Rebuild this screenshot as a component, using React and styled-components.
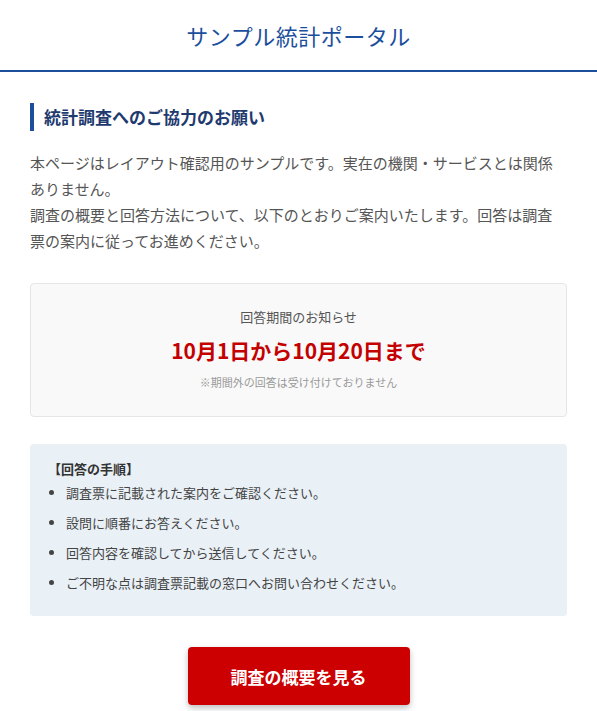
import React from 'react';
import styled, { createGlobalStyle } from 'styled-components';

const GlobalStyle = createGlobalStyle`
  html, body {
    margin: 0;
    padding: 0;
    background: #ffffff;
    font-family: "Noto Sans CJK JP", "Noto Sans", sans-serif;
    color: #444;
  }
  * { box-sizing: border-box; }
`;

const Header = styled.header`
  height: 72px;
  display: flex;
  align-items: center;
  justify-content: center;
  border-bottom: 2px solid #1b4f9c;
`;

const SiteTitle = styled.h1`
  margin: 0;
  font-size: 22px;
  font-weight: 400;
  color: #1b4f9c;
  letter-spacing: 0.5px;
`;

const Main = styled.main`
  padding: 31px 30px 20px;
  display: flex;
  flex-direction: column;
`;

const SectionTitle = styled.h2`
  margin: 0;
  padding-left: 10px;
  border-left: 4px solid #1b4f9c;
  font-size: 17px;
  font-weight: 700;
  color: #1e3a6e;
  line-height: 28px;
`;

const Lead = styled.p`
  margin: 19px 0 0;
  font-size: 15px;
  line-height: 26px;
  color: #555;
`;

const NoticeCard = styled.div`
  margin-top: 29px;
  background: #f9f9f9;
  border: 1px solid #e6e6e6;
  border-radius: 4px;
  padding: 23px 16px 26px;
  display: flex;
  flex-direction: column;
  align-items: center;
  gap: 9px;
`;

const CardSub = styled.div`
  font-size: 13px;
  color: #555;
`;

const CardHeadline = styled.div`
  font-size: 21px;
  font-weight: 700;
  color: #c40000;
`;

const CardNote = styled.div`
  font-size: 11px;
  color: #999;
`;

const StepsBox = styled.div`
  margin-top: 27px;
  background: #e9f0f6;
  border-radius: 4px;
  padding: 15px 18px 23px;
`;

const StepsTitle = styled.div`
  font-size: 13px;
  font-weight: 700;
  color: #333;
  margin-bottom: 5px;
`;

const StepList = styled.ul`
  margin: 0;
  padding-left: 18px;
  display: flex;
  flex-direction: column;
  gap: 10px;
`;

const Step = styled.li`
  font-size: 13px;
  line-height: 20px;
  color: #444;
`;

const ButtonRow = styled.div`
  margin-top: 31px;
  display: flex;
  justify-content: center;
`;

const ActionButton = styled.button`
  width: 222px;
  height: 58px;
  border: none;
  border-radius: 4px;
  background: #cc0000;
  color: #fff;
  font-family: inherit;
  font-size: 17px;
  font-weight: 700;
  box-shadow: 0 3px 6px rgba(0, 0, 0, 0.25);
  cursor: pointer;
`;

const steps = [
  '調査票に記載された案内をご確認ください。',
  '設問に順番にお答えください。',
  '回答内容を確認してから送信してください。',
  'ご不明な点は調査票記載の窓口へお問い合わせください。',
];

export default function App() {
  return (
    <>
      <GlobalStyle />
      <Header>
        <SiteTitle>サンプル統計ポータル</SiteTitle>
      </Header>
      <Main>
        <SectionTitle>統計調査へのご協力のお願い</SectionTitle>
        <Lead>
          本ページはレイアウト確認用のサンプルです。実在の機関・サービスとは関係ありません。
          <br />
          調査の概要と回答方法について、以下のとおりご案内いたします。回答は調査票の案内に従ってお進めください。
        </Lead>
        <NoticeCard>
          <CardSub>回答期間のお知らせ</CardSub>
          <CardHeadline>10月1日から10月20日まで</CardHeadline>
          <CardNote>※期間外の回答は受け付けておりません</CardNote>
        </NoticeCard>
        <StepsBox>
          <StepsTitle>【回答の手順】</StepsTitle>
          <StepList>
            {steps.map((s) => (
              <Step key={s}>{s}</Step>
            ))}
          </StepList>
        </StepsBox>
        <ButtonRow>
          <ActionButton>調査の概要を見る</ActionButton>
        </ButtonRow>
      </Main>
    </>
  );
}
